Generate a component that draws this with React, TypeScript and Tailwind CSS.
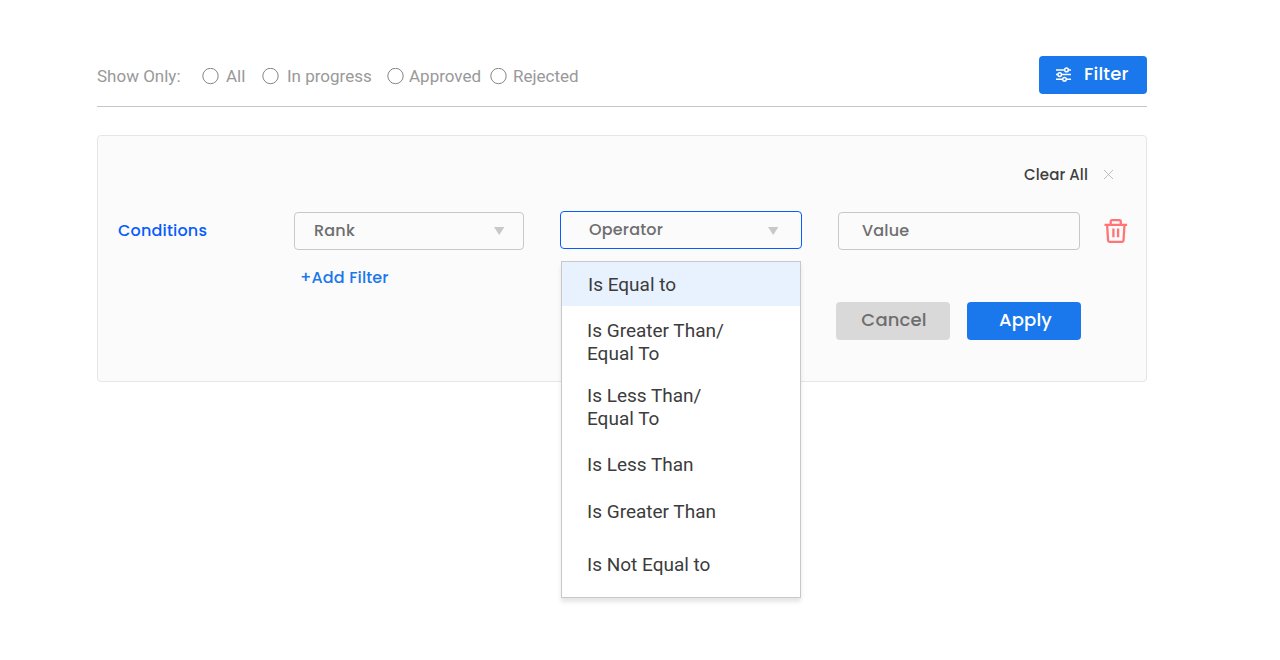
import type { ReactNode } from 'react';

const geo = "font-['Poppins','Inter',sans-serif] [font-feature-settings:'cv11'] font-medium whitespace-nowrap";

function Radio({ label, className, gap }: { label: string; className: string; gap: string }) {
  return (
    <label className={`flex items-center ${gap} ${className}`}>
      <svg width="17" height="17" viewBox="0 0 17 17" fill="none" stroke="#858585">
        <circle cx="8.5" cy="8" r="7.7" />
      </svg>
      <span className="whitespace-nowrap pt-px">{label}</span>
    </label>
  );
}

function Caret() {
  return (
    <svg width="11" height="8" viewBox="0 0 11 8" fill="#c8c8c8">
      <path d="M0 0h10.4L5.2 8z" />
    </svg>
  );
}

function SlidersIcon() {
  return (
    <svg className="-mt-[2px]" width="15" height="15" viewBox="0 0 15 15" fill="none" stroke="#fff" strokeWidth="1.5">
      <path d="M0 2.9h8.6M12.4 2.9H15M0 7.6h1.8M5.6 7.6H15M0 12.3h6.6M10.4 12.3H15" />
      <circle cx="10.5" cy="2.9" r="1.8" />
      <circle cx="3.7" cy="7.6" r="1.8" />
      <circle cx="8.5" cy="12.3" r="1.8" />
    </svg>
  );
}

function TrashIcon() {
  return (
    <svg className="-ml-[0.5px] -mt-px" width="24" height="24" viewBox="0 0 24 24" fill="none" stroke="#ff7575" strokeWidth="2.3" strokeLinejoin="round">
      <path d="M.5 5.8h22.6M6.7 5.8V2.3Q6.7 1.2 8 1.2h7.5q1.3 0 1.3 1.1v3.5M3.1 5.8l1 15.7q.1 1.3 1.3 1.3h12.8q1.2 0 1.3-1.3l1-15.7M9.4 9.6v8.7M14.1 9.6v8.7" />
    </svg>
  );
}

function Option({ children, className }: { children: ReactNode; className: string }) {
  return <li className={`pl-[25px] ${className}`}>{children}</li>;
}

export default function App() {
  return (
    <main className="h-[660px] w-[1280px] bg-white pl-[97px] pt-14 font-['Roboto',sans-serif]">
      <header className="flex h-[51px] w-[1050px] items-start justify-between border-b border-[#c6c6c6]">
        <div className="flex h-10 items-center text-[17px] text-[#999]">
          <span className="w-[105px] pt-px">Show Only:</span>
          <Radio label="All" gap="gap-[7px]" className="w-[60px]" />
          <Radio label="In progress" gap="gap-2" className="w-[125px]" />
          <Radio label="Approved" gap="gap-[5px]" className="w-[103px]" />
          <Radio label="Rejected" gap="gap-[6px]" className="" />
        </div>
        <button className={`flex h-[38px] w-[108px] items-center rounded-[4px] bg-[#1a77ec] pl-[17px] text-white ${geo}`}>
          <SlidersIcon />
          <span className="-mt-1 pl-[13px] text-[18px] tracking-[0.2px]">Filter</span>
        </button>
      </header>

      <section className="mt-7 h-[247px] w-[1050px] rounded-[4px] border border-[#e6e6e6] bg-[#fbfbfb] pl-5">
        <div className={`flex h-[76px] items-center justify-end pr-8 text-[15px] text-[#3f3f3f] ${geo}`}>
          <span className="pt-[2px] tracking-[0.1px]">Clear All</span>
          <svg className="ml-[15px]" width="11" height="11" viewBox="0 0 11 11" stroke="#b5b5b5" strokeWidth=".9">
            <path d="M1 1l9 9M10 1l-9 9" />
          </svg>
        </div>
        <div className={`flex h-[38px] items-center text-[16px] tracking-[0.18px] text-[#6e6e6e] ${geo}`}>
          <span className="w-44 text-[#085cff]">Conditions</span>
          <div className="flex h-[38px] w-[230px] items-center justify-between rounded-[4px] border border-[#c8c8c8] pl-[19px] pr-[18px]">
            <span>Rank</span>
            <Caret />
          </div>
          <div className="relative ml-9 h-10 w-[242px]">
            <div className="flex h-[38px] items-center justify-between rounded-[4px] border border-[#085cff] pl-7 pr-[22px]">
              <span>Operator</span>
              <span className="pt-[2px]"><Caret /></span>
            </div>
            <ul className="absolute left-px top-[50px] h-[337px] w-[240px] border border-[#c8c8c8] bg-white font-['Roboto',sans-serif] text-[19px] font-normal leading-[23px] tracking-normal text-[#3c3c3c] shadow-[0_4px_4px_rgba(0,0,0,0.1)]">
              <Option className="h-11 bg-[#e8f2ff] pt-[11px] indent-px">Is Equal to</Option>
              <Option className="h-[65px] pt-[13px]">Is Greater Than/<br />Equal To</Option>
              <Option className="h-[65px] pt-[13px]">Is Less Than/<br />Equal To</Option>
              <Option className="h-[47px] pt-[17px]">Is Less Than</Option>
              <Option className="h-[53px] pt-[17px]">Is Greater Than</Option>
              <Option className="pt-[17px]">Is Not Equal to</Option>
            </ul>
          </div>
          <div className="ml-9 flex h-[38px] w-[242px] items-center rounded-[4px] border border-[#c8c8c8] pl-[23px]">Value</div>
          <button className="ml-6" aria-label="Delete"><TrashIcon /></button>
        </div>
        <div className={`flex ${geo}`}>
          <button className="ml-[182px] mt-4 h-6 text-[16px] tracking-[0.14px] text-[#1a77ec]">+Add Filter</button>
          <div className="ml-auto mr-[65px] mt-[52px] flex gap-[17px] text-[18px] tracking-[0.15px]">
            <button className="h-[38px] w-[114px] rounded-[4px] bg-[#d9d9d9] pb-1 pl-[2px] text-[#6e6e6e]">Cancel</button>
            <button className="h-[38px] w-[114px] rounded-[4px] bg-[#1a77ec] pb-1 pl-[3px] text-white">Apply</button>
          </div>
        </div>
      </section>
    </main>
  );
}
